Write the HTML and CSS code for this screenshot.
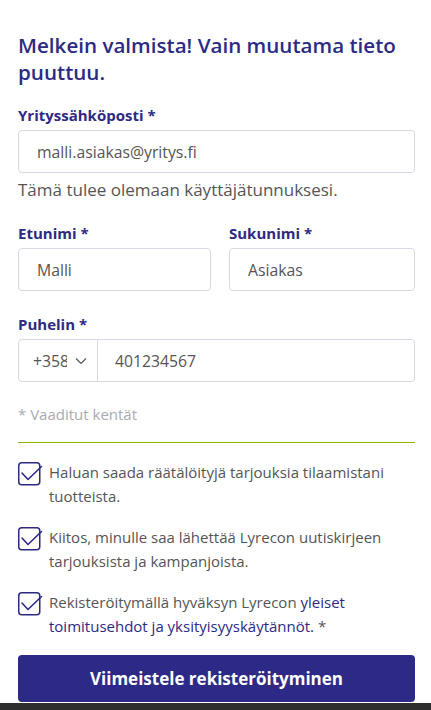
FILE: index.html
```html
<!DOCTYPE html>
<html lang="fi">
<head>
<meta charset="utf-8">
<title>Rekisteröityminen</title>
<link rel="stylesheet" href="styles.css">
</head>
<body>
<main class="page">
  <h1 class="title">Melkein valmista! Vain muutama tieto puuttuu.</h1>

  <div class="field">
    <label class="label">Yrityssähköposti *</label>
    <div class="input">malli.asiakas@yritys.fi</div>
    <p class="help">Tämä tulee olemaan käyttäjätunnuksesi.</p>
  </div>

  <div class="row">
    <div class="field col">
      <label class="label">Etunimi *</label>
      <div class="input">Malli</div>
    </div>
    <div class="field col">
      <label class="label">Sukunimi *</label>
      <div class="input">Asiakas</div>
    </div>
  </div>

  <div class="field phone-field">
    <label class="label">Puhelin *</label>
    <div class="phone">
      <div class="code"><span class="code-text">+358</span>
        <svg class="chev" width="12" height="8" viewBox="0 0 12 8"><path d="M1 1.5 L6 6.5 L11 1.5" fill="none" stroke="#555" stroke-width="1.2"/></svg>
      </div>
      <div class="num">401234567</div>
    </div>
  </div>

  <p class="required">* Vaaditut kentät</p>
  <hr class="divider">

  <div class="checks">
    <div class="check">
      <svg class="box" width="24" height="24" viewBox="0 0 24 24"><rect x="0.75" y="0.75" width="21" height="22" rx="3" fill="none" stroke="#2d2a84" stroke-width="1.5"/><path d="M4 11 L10 17.5 L23.5 4.5" fill="none" stroke="#2d2a84" stroke-width="1.6" stroke-linecap="round" stroke-linejoin="round"/></svg>
      <p class="check-text">Haluan saada räätälöityjä tarjouksia tilaamistani tuotteista.</p>
    </div>
    <div class="check">
      <svg class="box" width="24" height="24" viewBox="0 0 24 24"><rect x="0.75" y="0.75" width="21" height="22" rx="3" fill="none" stroke="#2d2a84" stroke-width="1.5"/><path d="M4 11 L10 17.5 L23.5 4.5" fill="none" stroke="#2d2a84" stroke-width="1.6" stroke-linecap="round" stroke-linejoin="round"/></svg>
      <p class="check-text">Kiitos, minulle saa lähettää Lyrecon uutiskirjeen tarjouksista ja kampanjoista.</p>
    </div>
    <div class="check">
      <svg class="box" width="24" height="24" viewBox="0 0 24 24"><rect x="0.75" y="0.75" width="21" height="22" rx="3" fill="none" stroke="#2d2a84" stroke-width="1.5"/><path d="M4 11 L10 17.5 L23.5 4.5" fill="none" stroke="#2d2a84" stroke-width="1.6" stroke-linecap="round" stroke-linejoin="round"/></svg>
      <p class="check-text">Rekisteröitymällä hyväksyn Lyrecon <a class="link" href="#">yleiset</a><br><a class="link" href="#">toimitusehdot ja yksityisyyskäytännöt.</a> *</p>
    </div>
  </div>

  <button class="submit" type="button">Viimeistele rekisteröityminen</button>
</main>
<div class="bottombar"></div>
</body>
</html>
```

FILE: styles.css
```css
* { box-sizing: border-box; }

html, body {
  margin: 0;
  padding: 0;
  background: #ffffff;
}

body {
  font-family: "Open Sans", "Noto Sans", sans-serif;
  color: #555555;
  height: 710px;
  overflow: hidden;
}

.page {
  padding: 32px 16px 0 18px;
}

.title {
  margin: 0 0 19px 0;
  font-size: 20.6px;
  line-height: 27px;
  font-weight: 600;
  color: #2d2a84;
}

.field {
  display: flex;
  flex-direction: column;
}

.label {
  font-size: 15px;
  line-height: 20px;
  font-weight: 700;
  color: #2d2a84;
  margin-bottom: 5px;
}

.input {
  height: 43px;
  border: 1px solid #d6d9e1;
  border-radius: 4px;
  padding: 0 18px;
  display: flex;
  align-items: center;
  font-size: 15.75px;
  color: #555555;
}

.help {
  margin: 6px 0 0 0;
  font-size: 17px;
  line-height: 22px;
  color: #555555;
}

.row {
  display: grid;
  grid-template-columns: 193px 186px;
  column-gap: 18px;
  margin-top: 22px;
}

.phone-field {
  margin-top: 23px;
}

.phone {
  height: 43px;
  border: 1px solid #d6d9e1;
  border-radius: 4px;
  display: flex;
  font-size: 15.75px;
  color: #555555;
}

.code {
  width: 79px;
  flex: none;
  border-right: 1px solid #d6d9e1;
  display: flex;
  align-items: center;
  padding-left: 14px;
  overflow: hidden;
}

.code-text {
  display: inline-block;
  width: 34px;
  overflow: hidden;
  white-space: nowrap;
}

.chev {
  margin-left: 8px;
}

.num {
  display: flex;
  align-items: center;
  padding-left: 17px;
}

.required {
  margin: 22px 0 0 0;
  font-size: 15px;
  line-height: 20px;
  color: #a9abb3;
}

.divider {
  margin: 18px 0 0 0;
  border: 0;
  border-top: 1px solid #8db600;
  height: 0;
}

.checks {
  display: flex;
  flex-direction: column;
  gap: 17px;
  margin-top: 17px;
}

.check {
  display: flex;
  gap: 7px;
  align-items: flex-start;
}

.box {
  flex: none;
  overflow: visible;
  margin-top: 2px;
}

.check-text {
  margin: 0;
  font-size: 15px;
  line-height: 24px;
  color: #555555;
  padding-right: 20px;
}

.link {
  color: #2d2a84;
  text-decoration: none;
}

.submit {
  display: block;
  width: 100%;
  height: 47px;
  margin-top: 17px;
  border: 0;
  border-radius: 4px;
  background: #2d2a87;
  color: #ffffff;
  font-family: "Open Sans", "Noto Sans", sans-serif;
  font-size: 17px;
  font-weight: 700;
}

.bottombar {
  height: 8px;
  margin-top: 1px;
  background: #2e2e2e;
}
```
